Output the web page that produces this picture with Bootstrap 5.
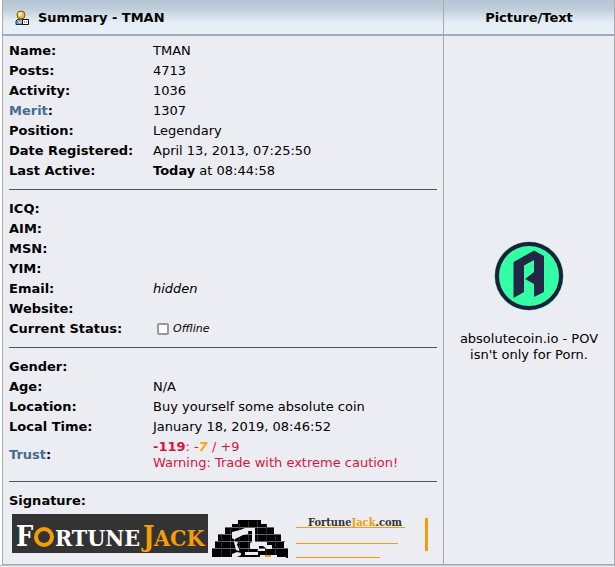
<!DOCTYPE html>
<html lang="en">
<head>
<meta charset="utf-8">
<meta name="viewport" content="width=device-width, initial-scale=1">
<title>Summary - TMAN</title>
<link rel="stylesheet" href="https://cdn.jsdelivr.net/npm/bootstrap@5.3.0/dist/css/bootstrap.min.css">
<style>
body{font:13px/16px Verdana,"DejaVu Sans",sans-serif;color:#000;background:#ecedf3}
.profile-wrap{padding-left:2px;background:#fff;border-bottom:1px solid #b6c5d2}
.profile{border:1px solid #aaa;border-top:0;border-collapse:separate;border-spacing:0;background:#ecedf3}
.profile>tbody>tr>td{height:528px;padding:4px 6px}
.profile>thead>tr>th{height:36px;padding:2px 12px 0;border-bottom:2px solid #9bafbd;background:linear-gradient(#b6c6d4,#bfcdda 25%,#e5edf5 65%,#e8eff6)}
.profile .side{width:171px;border-left:1px solid #aaa}
.facts th,.facts td{height:20px;padding:3px 0 1px}
.facts th{width:144px}
.facts a{color:#476c8e}
.facts .rule td{height:18px;padding:8px 0}
.rule hr{margin:0;border-color:#555;opacity:1}
.small-status{font-size:11px}
.status-box.form-check-input{width:12px;height:12px;margin:0 4px;border:2px solid #999;border-radius:2px}
.bad{color:#dc143c}
.neg{color:#ffa500}
.sig{padding:4px 3px 0}
.logo-space{padding-top:4px}
.side-text{margin-top:20px}
</style>
<script src="https://cdn.jsdelivr.net/npm/bootstrap@5.3.0/dist/js/bootstrap.bundle.min.js"></script>
</head>
<body>
<main class="profile-wrap">
<table class="profile w-100">
<thead><tr>
<th><div class="d-flex align-items-center gap-2">
<svg width="15" height="16" viewBox="0 0 15 16" aria-hidden="true"><path d="M1 14.500V11l2-2h6l2 2v3.500z" fill="#829cc2" stroke="#202d42"/><path d="M3 11l2 2 2-3" fill="none" stroke="#dce8f5"/><circle cx="6" cy="5" r="4" fill="#edb943" stroke="#775315"/><circle cx="5" cy="4" r="2" fill="#ffebaa"/><path d="M7.500 9.500h6v5h-6z" fill="#fff" stroke="#111"/><path d="M9 11h1v2H9zm2 0h1v2h-1z" fill="#9aa7c0"/></svg>
<span>Summary - TMAN</span></div></th>
<th class="side text-center">Picture/Text</th>
</tr></thead>
<tbody><tr>
<td class="align-top">
<table class="facts w-100">
<tbody>
<tr><th>Name:</th><td>TMAN</td></tr>
<tr><th>Posts:</th><td>4713</td></tr>
<tr><th>Activity:</th><td>1036</td></tr>
<tr><th><a href="#merit" class="text-decoration-none">Merit</a>:</th><td>1307</td></tr>
<tr><th>Position:</th><td>Legendary</td></tr>
<tr><th>Date Registered:</th><td>April 13, 2013, 07:25:50</td></tr>
<tr><th>Last Active:</th><td><b>Today</b> at 08:44:58</td></tr>
<tr class="rule"><td colspan="2"><hr></td></tr>
<tr><th>ICQ:</th><td></td></tr>
<tr><th>AIM:</th><td></td></tr>
<tr><th>MSN:</th><td></td></tr>
<tr><th>YIM:</th><td></td></tr>
<tr><th>Email:</th><td><i>hidden</i></td></tr>
<tr><th>Website:</th><td></td></tr>
<tr><th>Current Status:</th><td><div class="d-flex align-items-center"><input class="status-box form-check-input" type="checkbox" id="online"><label for="online" class="small-status fst-italic">Offline</label></div></td></tr>
<tr class="rule"><td colspan="2"><hr></td></tr>
<tr><th>Gender:</th><td></td></tr>
<tr><th>Age:</th><td>N/A</td></tr>
<tr><th>Location:</th><td>Buy yourself some absolute coin</td></tr>
<tr><th>Local Time:</th><td>January 18, 2019, 08:46:52</td></tr>
<tr><th><a href="#trust" class="text-decoration-none">Trust</a>:</th><td class="bad"><b>-119</b>: -<b class="neg fst-italic">7</b> / +9<br>Warning: Trade with extreme caution!</td></tr>
<tr class="rule"><td colspan="2"><hr></td></tr>
<tr><th colspan="2">Signature:</th></tr>
</tbody>
</table>
<div class="sig d-flex align-items-start">
<svg width="418" height="45" viewBox="0 0 418 45" role="img" aria-label="FortuneJack signature">
<path d="M0 0h196v39H0z" fill="#333"/>
<g font-family="'DejaVu Serif Condensed','DejaVu Serif',serif" font-weight="bold" fill="#fff">
<text x="4" y="32" font-size="27">F</text>
<text x="43" y="32" font-size="23">RTUNE</text>
<g fill="#f59d05"><text x="131" y="32" font-size="27">J</text><text x="142" y="32" font-size="23">ACK</text></g>
</g>
<circle cx="32" cy="23" r="8" fill="none" stroke="#f59d05" stroke-width="4"/>
<g transform="translate(200 6)">
<path d="M0 37V28h3V21h3V14h7V7h7V4h6V0h23v4h6v3h7v7h7v7h3v7h4v9z" fill="#000"/>
<path d="M0 28.500h76M3 21.500h70M6 14.500h63M13 7.500h49" stroke="#666" fill="none"/>
<path d="M9.500 14v23M18.500 8v29M27.500 4v33M36.500 1v36M45.500 1v36M54.500 4v33M63.500 14v23" stroke="#26313b" stroke-dasharray="6 1" fill="none"/>
<path d="M33 8h10v14h12v3h5v4h-5l-4-3h-4v3h-9v-6l2-1V11h-4v3l-5 1-8 4v3h3l-1 3 2 4v2l-3-1-2-8 1-2-3-2v-6l8-2z" fill="#ecedf3"/>
<path d="M20 37v-3l5-2 4 1v2l-4 2zM33 32h13v3H33zM46 29h7v2h-7zM48 35h5v2h-5zM59 35h6v2h-6z" fill="#ecedf3"/><path d="M53 35h6v2h-6z" fill="#f59d05"/>
</g>
<path d="M274 44v-5h2v5z" fill="#000"/>
<g font-family="'DejaVu Serif Condensed','DejaVu Serif',serif" font-size="11" font-weight="bold"><text x="296" y="12" fill="#333">Fortune<tspan fill="#f59d05">Jack</tspan>.com</text></g>
<path d="M284 13.500h109M284 29.500h102M284 43.500h84" stroke="#f59d05"/>
<path d="M413 4h3v33h-3z" fill="#f59d05"/>
</svg>
</div>
</td>
<td class="side text-center align-middle">
<div class="logo-space"><svg width="70" height="70" viewBox="0 0 70 70" role="img" aria-label="Absolute Coin"><circle cx="35" cy="35" r="34.500" fill="#22e69a"/><circle cx="35" cy="35" r="32" fill="#33ffa5" stroke="#211d3d" stroke-width="4"/><path d="M19.500 21L40 9.500 50 15v36l-10 5V43l-9-5 9-7V19l-10 5.500V51l-10.500 6z" fill="#212744"/></svg></div>
<div class="side-text">absolutecoin.io - POV isn't only for Porn.</div>
</td>
</tr></tbody>
</table>
</main>
</body>
</html>
